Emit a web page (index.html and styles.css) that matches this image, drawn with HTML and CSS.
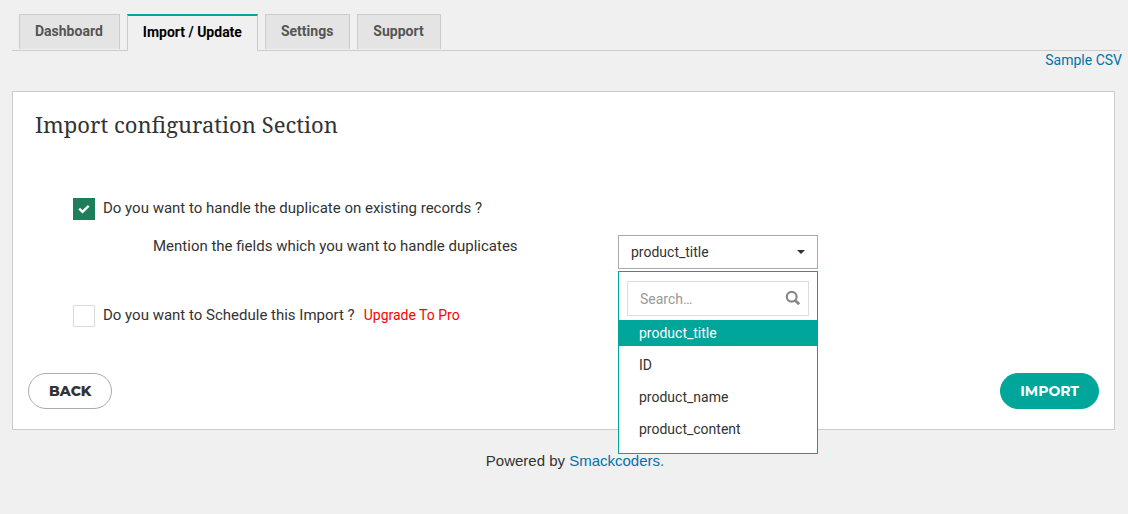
FILE: index.html
```html
<!DOCTYPE html>
<html lang="en">
<head>
<meta charset="utf-8">
<meta name="viewport" content="width=device-width, initial-scale=1">
<title>Import configuration</title>
<link rel="stylesheet" href="styles.css">
</head>
<body>
<div class="page">
  <nav class="tabs">
    <a class="tab" href="#">Dashboard</a>
    <a class="tab tab-active" href="#" aria-current="page">Import / Update</a>
    <a class="tab" href="#">Settings</a>
    <a class="tab" href="#">Support</a>
  </nav>
  <div class="sample"><a class="link" href="#">Sample CSV</a></div>

  <main class="panel">
    <h1 class="title">Import configuration Section</h1>
    <form class="options">
      <div class="option">
        <span class="check-box">
          <input class="check" type="checkbox" id="duplicates" checked>
          <svg class="check-mark" viewBox="0 0 12 10" width="12" height="10" aria-hidden="true"><path d="M1.2 4.6l3.3 3.2 6.2-6" fill="none" stroke="currentColor" stroke-width="2.3"/></svg>
        </span>
        <label for="duplicates">Do you want to handle the duplicate on existing records ?</label>
      </div>
      <div class="field">
        <label class="field-label" for="match">Mention the fields which you want to handle duplicates</label>
        <div class="picker">
          <select class="picker-select" id="match">
            <option>product_title</option>
            <option>ID</option>
            <option>product_name</option>
            <option>product_content</option>
          </select>
          <span class="caret"></span>
          <div class="menu">
            <div class="search">
              <input class="search-input" type="text" placeholder="Search…" aria-label="Search">
              <svg class="search-icon" viewBox="0 0 16 16" width="16" height="16" aria-hidden="true"><circle cx="6.7" cy="6.7" r="4.9" fill="none" stroke="currentColor" stroke-width="2.2"/><path d="M10.2 10.2l4 4" stroke="currentColor" stroke-width="2.8" stroke-linecap="butt"/></svg>
            </div>
            <ul class="menu-list">
              <li class="menu-item menu-item-active">product_title</li>
              <li class="menu-item">ID</li>
              <li class="menu-item">product_name</li>
              <li class="menu-item">product_content</li>
            </ul>
          </div>
        </div>
      </div>
      <div class="option">
        <span class="check-box">
          <input class="check" type="checkbox" id="schedule">
        </span>
        <label for="schedule">Do you want to Schedule this Import ?</label>
        <a class="upgrade" href="#">Upgrade To Pro</a>
      </div>
    </form>
    <div class="actions">
      <button class="button" type="button">BACK</button>
      <button class="button button-primary" type="button">IMPORT</button>
    </div>
  </main>
  <footer class="footer">Powered by <a class="link" href="#">Smackcoders.</a></footer>
</div>
</body>
</html>
```
FILE: styles.css
```css
* { box-sizing: border-box; }
body {
  margin: 0;
  background: #f0f0f0;
  color: #333;
  font: 15px/20px Roboto, sans-serif;
}
a { text-decoration: none; }
.link { color: #0073aa; }
.page { padding: 14px 6px 0 12px; }

.tabs {
  display: flex;
  align-items: flex-start;
  gap: 7px;
  height: 37px;
  margin-right: 2px;
  padding-left: 7px;
  border-bottom: 1px solid #ccc;
}
.tab {
  height: 35px;
  padding: 6px 16px 6px 15px;
  border: 1px solid #ccc;
  border-bottom: 0;
  background: #e4e4e4;
  color: #555;
  font-size: 14px;
  font-weight: 700;
}
.tab-active {
  height: 37px;
  padding-right: 15px;
  border-top: 2px solid #00a699;
  background: #f0f0f0;
  color: #000;
}
.sample {
  height: 40px;
  font-size: 14px;
  line-height: 18px;
  text-align: right;
}

.panel {
  margin-right: 7px;
  padding: 16px 15px 20px;
  border: 1px solid #ccc;
  background: #fff;
}
.title {
  margin: 0 0 58px 7px;
  font: 400 22px/32px "Roboto Slab", "Noto Serif", "DejaVu Serif", serif;
}
.options { padding-left: 45px; }
.option {
  display: flex;
  align-items: flex-start;
  height: 22px;
}
.check-box {
  position: relative;
  width: 22px;
  height: 22px;
  margin-right: 8px;
}
.check {
  appearance: none;
  display: block;
  width: 100%;
  height: 100%;
  margin: 0;
  border: 1px solid #ddd;
  background: #fff;
}
.check:checked {
  border-color: #1e7e5a;
  background: #1e7e5a;
}
.check-mark {
  position: absolute;
  top: 6px;
  left: 5px;
  color: #fff;
  pointer-events: none;
}
.upgrade {
  margin-left: 9px;
  color: #f00;
  font-size: 14px;
}
.field {
  display: flex;
  margin: 15px 0 36px 80px;
}
.field-label {
  width: 465px;
  padding-top: 1px;
}
.picker {
  position: relative;
  width: 200px;
}
.picker-select {
  appearance: none;
  display: block;
  width: 100%;
  height: 34px;
  padding: 0 12px;
  border: 1px solid #aaa;
  border-radius: 0;
  background: #fff;
  color: #333;
  font: 14px/20px Roboto, sans-serif;
}
.caret {
  position: absolute;
  top: 15px;
  right: 13px;
  border: 4px solid transparent;
  border-top-color: #333;
  border-bottom: 0;
  pointer-events: none;
}
.menu {
  position: absolute;
  top: 36px;
  left: 0;
  width: 100%;
  padding: 9px 0 11px;
  border: 1px solid #00a699;
  background: #fff;
}
.search {
  position: relative;
  margin: 0 8px 4px;
}
.search-input {
  display: block;
  width: 100%;
  height: 35px;
  padding: 0 36px 0 12px;
  border: 1px solid #ddd;
  font: 14px/20px Roboto, sans-serif;
}
.search-input::placeholder { color: #999; }
.search-icon {
  position: absolute;
  top: 9px;
  right: 8px;
  color: #888;
}
.menu-list {
  display: grid;
  gap: 6px;
  margin: 0;
  padding: 0;
  list-style: none;
}
.menu-item {
  padding: 3px 20px;
  font-size: 14px;
}
.menu-item-active {
  background: #00a699;
  color: #fff;
}
.actions {
  display: flex;
  align-items: center;
  justify-content: space-between;
  margin-top: 46px;
}
.button {
  height: 36px;
  padding: 0 20px;
  border: 1px solid #aaa;
  border-radius: 18px;
  background: #fff;
  color: #333;
  font: 800 14px/20px Montserrat, Inter, sans-serif;
}
.button-primary {
  padding: 0 19px;
  border-color: #00a699;
  background: #00a699;
  color: #fff;
  font-weight: 700;
}
.footer {
  padding: 21px 0 21px 16px;
  font-family: "Liberation Sans", Arial, sans-serif;
  text-align: center;
}
```
